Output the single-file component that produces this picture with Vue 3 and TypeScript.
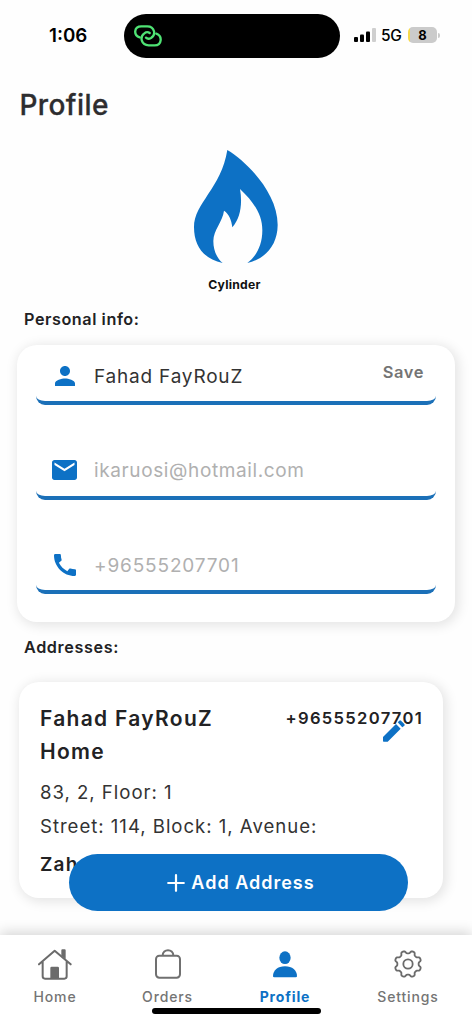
<script setup lang="ts">
interface Field {
  icon: 'person' | 'mail' | 'phone'
  value: string
  muted: boolean
  action?: string
}

const fields: Field[] = [
  { icon: 'person', value: 'Fahad FayRouZ', muted: false, action: 'Save' },
  { icon: 'mail', value: 'ikaruosi@hotmail.com', muted: true },
  { icon: 'phone', value: '+96555207701', muted: true },
]

const tabs = [
  { id: 'home', label: 'Home' },
  { id: 'orders', label: 'Orders' },
  { id: 'profile', label: 'Profile' },
  { id: 'settings', label: 'Settings' },
]
const activeTab = 'profile'

// Outline of an eight-toothed gear with softly rounded teeth
function gearPath(cx: number, cy: number, base: number, depth: number): string {
  const points: string[] = []
  for (let i = 0; i < 160; i++) {
    const a = (i / 160) * Math.PI * 2
    const wave = Math.tanh(2 * Math.cos(8 * (a - Math.PI / 8))) / Math.tanh(2)
    const r = base + depth * wave
    points.push(`${(cx + r * Math.cos(a)).toFixed(2)} ${(cy + r * Math.sin(a)).toFixed(2)}`)
  }
  return `M${points.join('L')}Z`
}
const gear = gearPath(42, 42, 36, 4)
</script>

<template>
  <div class="screen">
    <header class="status">
      <span class="time">1:06</span>
      <div class="island">
        <svg class="link" viewBox="0 0 84 66" fill="none" stroke="#4fe374" stroke-width="7" stroke-linecap="round">
          <path d="M17 37C-2 31 -1 4 22 4H40C62 4 67 30 51 39C45 42 39 41 36 38" />
          <path d="M67 26C86 33 84 61 62 61H44C22 61 16 36 31 25C36 21 43 21 47 24" />
        </svg>
      </div>
      <svg class="signal" viewBox="0 0 22 14">
        <rect x="0" y="9" width="4" height="5" rx="1" />
        <rect x="6" y="6.500" width="4" height="7.500" rx="1" />
        <rect x="12" y="3.500" width="4" height="10.500" rx="1" />
        <rect x="18" y="0" width="4" height="14" rx="1" fill="#cfcfcf" />
      </svg>
      <span class="network">5G</span>
      <div class="battery"><span>8</span></div>
      <i class="battery-cap"></i>
    </header>

    <main>
      <h1>Profile</h1>
      <div class="brand">
        <svg class="flame" viewBox="72 30 252 339" preserveAspectRatio="none">
          <path fill="#0d71c5" d="M172 30C232 66 324 160 323 256C322 316 287 356 232 369C258 350 277 317 277 271C277 222 250 185 210 147C218 192 211 236 187 262C184 239 177 222 162 212C158 245 130 270 130 303C130 332 141 355 158 369C104 358 72 321 72 261C72 190 154 144 172 30Z" />
        </svg>
        <span>Cylinder</span>
      </div>

      <h2>Personal info:</h2>
      <section class="card info">
        <div v-for="field in fields" :key="field.icon" class="field">
          <span class="field-icon">
            <svg v-if="field.icon === 'person'" class="icon-person" viewBox="4 4 16 16">
              <path d="M12 12c2.210 0 4-1.790 4-4s-1.790-4-4-4-4 1.790-4 4 1.790 4 4 4zm0 2c-2.670 0-8 1.340-8 4v2h16v-2c0-2.660-5.330-4-8-4z" />
            </svg>
            <svg v-else-if="field.icon === 'mail'" class="icon-mail" viewBox="2 4 20 16">
              <path d="M20 4H4c-1.100 0-1.990.9-1.990 2L2 18c0 1.100.9 2 2 2h16c1.100 0 2-.9 2-2V6c0-1.100-.9-2-2-2zm0 4l-8 5-8-5V6l8 5 8-5v2z" />
            </svg>
            <svg v-else class="icon-phone" viewBox="3 3 18 18">
              <path d="M20.010 15.380c-1.230 0-2.420-.2-3.530-.56-.35-.12-.74-.03-1.010.24l-1.570 1.970c-2.830-1.350-5.480-3.900-6.890-6.830l1.950-1.660c.27-.28.35-.67.24-1.020-.37-1.110-.56-2.300-.56-3.530 0-.54-.45-.99-.99-.99H4.190C3.650 3 3 3.240 3 3.990 3 13.280 10.730 21 20.010 21c.71 0 .99-.63.99-1.180v-3.450c0-.54-.45-.99-.99-.99z" />
            </svg>
          </span>
          <span class="value" :class="[field.icon, { muted: field.muted }]">{{ field.value }}</span>
          <button v-if="field.action" type="button" class="save">{{ field.action }}</button>
        </div>
      </section>

      <h2 class="addresses-title">Addresses:</h2>
      <section class="card address">
        <div class="address-head">
          <strong class="name">Fahad FayRouZ</strong>
          <span class="tel">
            +96555207701
            <svg class="edit" viewBox="0 0 66 66">
              <path d="M0 51L39 12L53 26L14 65H2Q0 65 0 63Z" />
              <path d="M44 7L49 2Q51 0 54 2L64 12Q66 15 64 17L58 22Z" />
            </svg>
          </span>
        </div>
        <strong class="place">Home</strong>
        <p class="line unit">83, 2, Floor: 1</p>
        <p class="line street">Street: 114, Block: 1, Avenue:</p>
        <strong class="area">Zah</strong>
      </section>
    </main>

    <button type="button" class="add">
      <svg viewBox="0 0 18 18" fill="none" stroke="#fff" stroke-width="2.200" stroke-linecap="round">
        <path d="M9 1.200V16.800M1.200 9H16.800" />
      </svg>
      <span>Add Address</span>
    </button>

    <nav>
      <a v-for="tab in tabs" :key="tab.id" class="tab" :class="[tab.id, { active: tab.id === activeTab }]">
        <span class="tab-icon">
          <svg v-if="tab.id === 'home'" width="34" height="31" viewBox="0 0 102 93" fill="none" stroke="#6b6b6b" stroke-width="6" stroke-linecap="round" stroke-linejoin="round">
            <path d="M3 46L50 5L98 46M14 38V82Q14 89 21 89H79Q86 89 86 82V38" />
            <path fill="#6b6b6b" stroke="none" d="M37 88V57Q37 53 41 53H59Q63 53 63 57V88ZM70 20V4Q70 1 73 1H80Q83 1 83 4V30Z" />
          </svg>
          <svg v-else-if="tab.id === 'orders'" width="26" height="30" viewBox="0 0 78 90" fill="none" stroke="#707070" stroke-width="6">
            <rect x="3" y="20" width="72" height="66" rx="10" />
            <path d="M23 20C23 -2 55 -2 55 20" />
          </svg>
          <svg v-else-if="tab.id === 'profile'" width="24" height="27" viewBox="0 0 72 81" fill="#0d71c5">
            <ellipse cx="36" cy="20" rx="17" ry="19" />
            <path d="M0 76C0 58 14 46 36 46S72 58 72 76Q72 79 68 79H4Q0 79 0 76Z" />
          </svg>
          <svg v-else width="28" height="28" viewBox="0 0 84 84" fill="none" stroke="#6b6b6b" stroke-width="5.500" stroke-linejoin="round">
            <path :d="gear" />
            <circle cx="42" cy="42" r="14" />
          </svg>
        </span>
        <span class="tab-label">{{ tab.label }}</span>
      </a>
      <i class="home-bar"></i>
    </nav>
  </div>
</template>

<style>
body { margin: 0; background: #fefefe; }
</style>

<style scoped>
* { box-sizing: border-box; }
.screen {
  position: relative;
  width: 472px;
  height: 1024px;
  overflow: hidden;
  background: #fefefe;
  color: #222224;
  font-family: Inter, Roboto, "Liberation Sans", sans-serif;
  display: flex;
  flex-direction: column;
}
button { border: 0; padding: 0; background: none; font-family: inherit; }

.status { display: flex; align-items: center; height: 71px; flex: none; color: #000; }
.time { width: 124px; padding-left: 49px; font-size: 18.800px; font-weight: 600; line-height: 22px; margin-top: 1px; }
.island { width: 216px; height: 44px; border-radius: 22px; background: #000; display: flex; align-items: center; padding-left: 10px; }
.link { width: 28px; height: 22px; }
.signal { width: 22px; height: 14px; margin: -1px 0 0 14px; }
.network { width: 27px; margin: 0 0 0 5px; font-size: 15.500px; font-weight: 500; letter-spacing: -0.300px; }
.battery {
  width: 29px; height: 16px; margin-top: -1px; border-radius: 5px;
  background: linear-gradient(90deg, #f5d94d 0 2.500px, #cbcbcb 2.500px);
  display: flex; align-items: center; justify-content: center;
  font-size: 13px; font-weight: 700;
}
.battery-cap { width: 2px; height: 5px; margin: -1px 0 0 1px; border-radius: 0 2px 2px 0; background: #cbcbcb; }

main { flex: none; }
h1 { margin: 16px 0 0 19.500px; font-size: 28px; line-height: 36px; font-weight: 500; letter-spacing: 0.400px; color: #2d2d2f; -webkit-text-stroke: 0.300px; }
.brand { margin-top: 27px; display: flex; flex-direction: column; align-items: center; }
.flame { width: 84px; height: 113px; }
.brand span { margin: 14px 3px 0 0; font-size: 12.200px; line-height: 16px; font-weight: 700; letter-spacing: 0.250px; color: #111; }
h2 { margin: 16px 0 0 24px; font-size: 16.200px; line-height: 20px; font-weight: 600; letter-spacing: 0.560px; }

.card { background: #fff; box-shadow: 2px 2px 12px 2px rgba(0, 0, 0, 0.1); }
.info { margin: 16px 17px 0 17px; height: 277px; border-radius: 20px; padding: 8px 19px 0 19px; }
.field {
  height: 52px; margin-bottom: 42.500px;
  border-bottom: 4px solid #1b70b8; border-radius: 9px;
  display: flex; align-items: center;
}
.field-icon { width: 57px; margin-top: -3px; display: flex; justify-content: center; fill: #0d71c5; }
.icon-person { width: 20px; height: 20px; }
.icon-mail { width: 25px; height: 20px; }
.icon-phone { width: 22px; height: 22px; }
.value { flex: 1; padding-left: 1px; margin-top: -1px; font-size: 19px; line-height: 24px; letter-spacing: 0.800px; color: #333; white-space: nowrap; }
.value.muted { color: #b0b0b0; }
.value.mail { letter-spacing: 0.620px; }
.value.phone { letter-spacing: 0.850px; }
.save { margin: -10px 12px 0 0; font-size: 16.400px; line-height: 20px; font-weight: 600; letter-spacing: 0.600px; color: #747474; }

.addresses-title { margin-top: 15px; letter-spacing: 0.620px; }
.address { margin: 25px 29px 0 19px; height: 216px; border-radius: 20px; padding: 23px 19px 0 21px; }
.address strong { display: block; font-weight: 600; }
.address-head { display: flex; justify-content: space-between; }
.name, .place { font-size: 21px; line-height: 28px; letter-spacing: 1.300px; }
.place { margin-top: 5px; }
.tel { position: relative; margin-right: 1px; font-size: 16.600px; line-height: 26px; font-weight: 600; letter-spacing: 1.300px; }
.edit { position: absolute; left: 97px; top: 15px; width: 22px; height: 22px; fill: #0d71c5; }
.line { margin: 0; font-size: 18.600px; line-height: 24px; letter-spacing: 0.970px; color: #333; white-space: nowrap; }
.unit { margin-top: 14px; }
.street { margin-top: 10px; }
.area { margin-top: 15px; font-size: 19px; line-height: 24px; letter-spacing: 1.200px; }

.add {
  position: absolute; left: 69px; top: 854px; width: 339px; height: 57px;
  border-radius: 29px; background: #0d71c5; color: #fff;
  display: flex; align-items: center; justify-content: center; gap: 6px; padding-left: 5px;
}
.add svg { width: 18px; height: 18px; }
.add span { font-size: 18px; font-weight: 600; letter-spacing: 1px; }

nav {
  position: relative; margin-top: auto; height: 89px; flex: none;
  background: #fff; box-shadow: 0 -3px 12px rgba(0, 0, 0, 0.16);
  display: grid; grid-template-columns: 110px 115px 120px 126px;
}
.tab { display: flex; flex-direction: column; align-items: center; padding-top: 12px; color: #747474; }
.tab-icon { height: 34px; display: flex; align-items: center; }
.tab-label { margin-top: 7px; font-size: 14px; line-height: 18px; font-weight: 500; letter-spacing: 0.850px; }
.active .tab-label { color: #0d71c5; font-weight: 700; }
.home-bar { position: absolute; left: 152px; bottom: 10px; width: 169px; height: 6px; border-radius: 3px; background: #000; }
</style>
